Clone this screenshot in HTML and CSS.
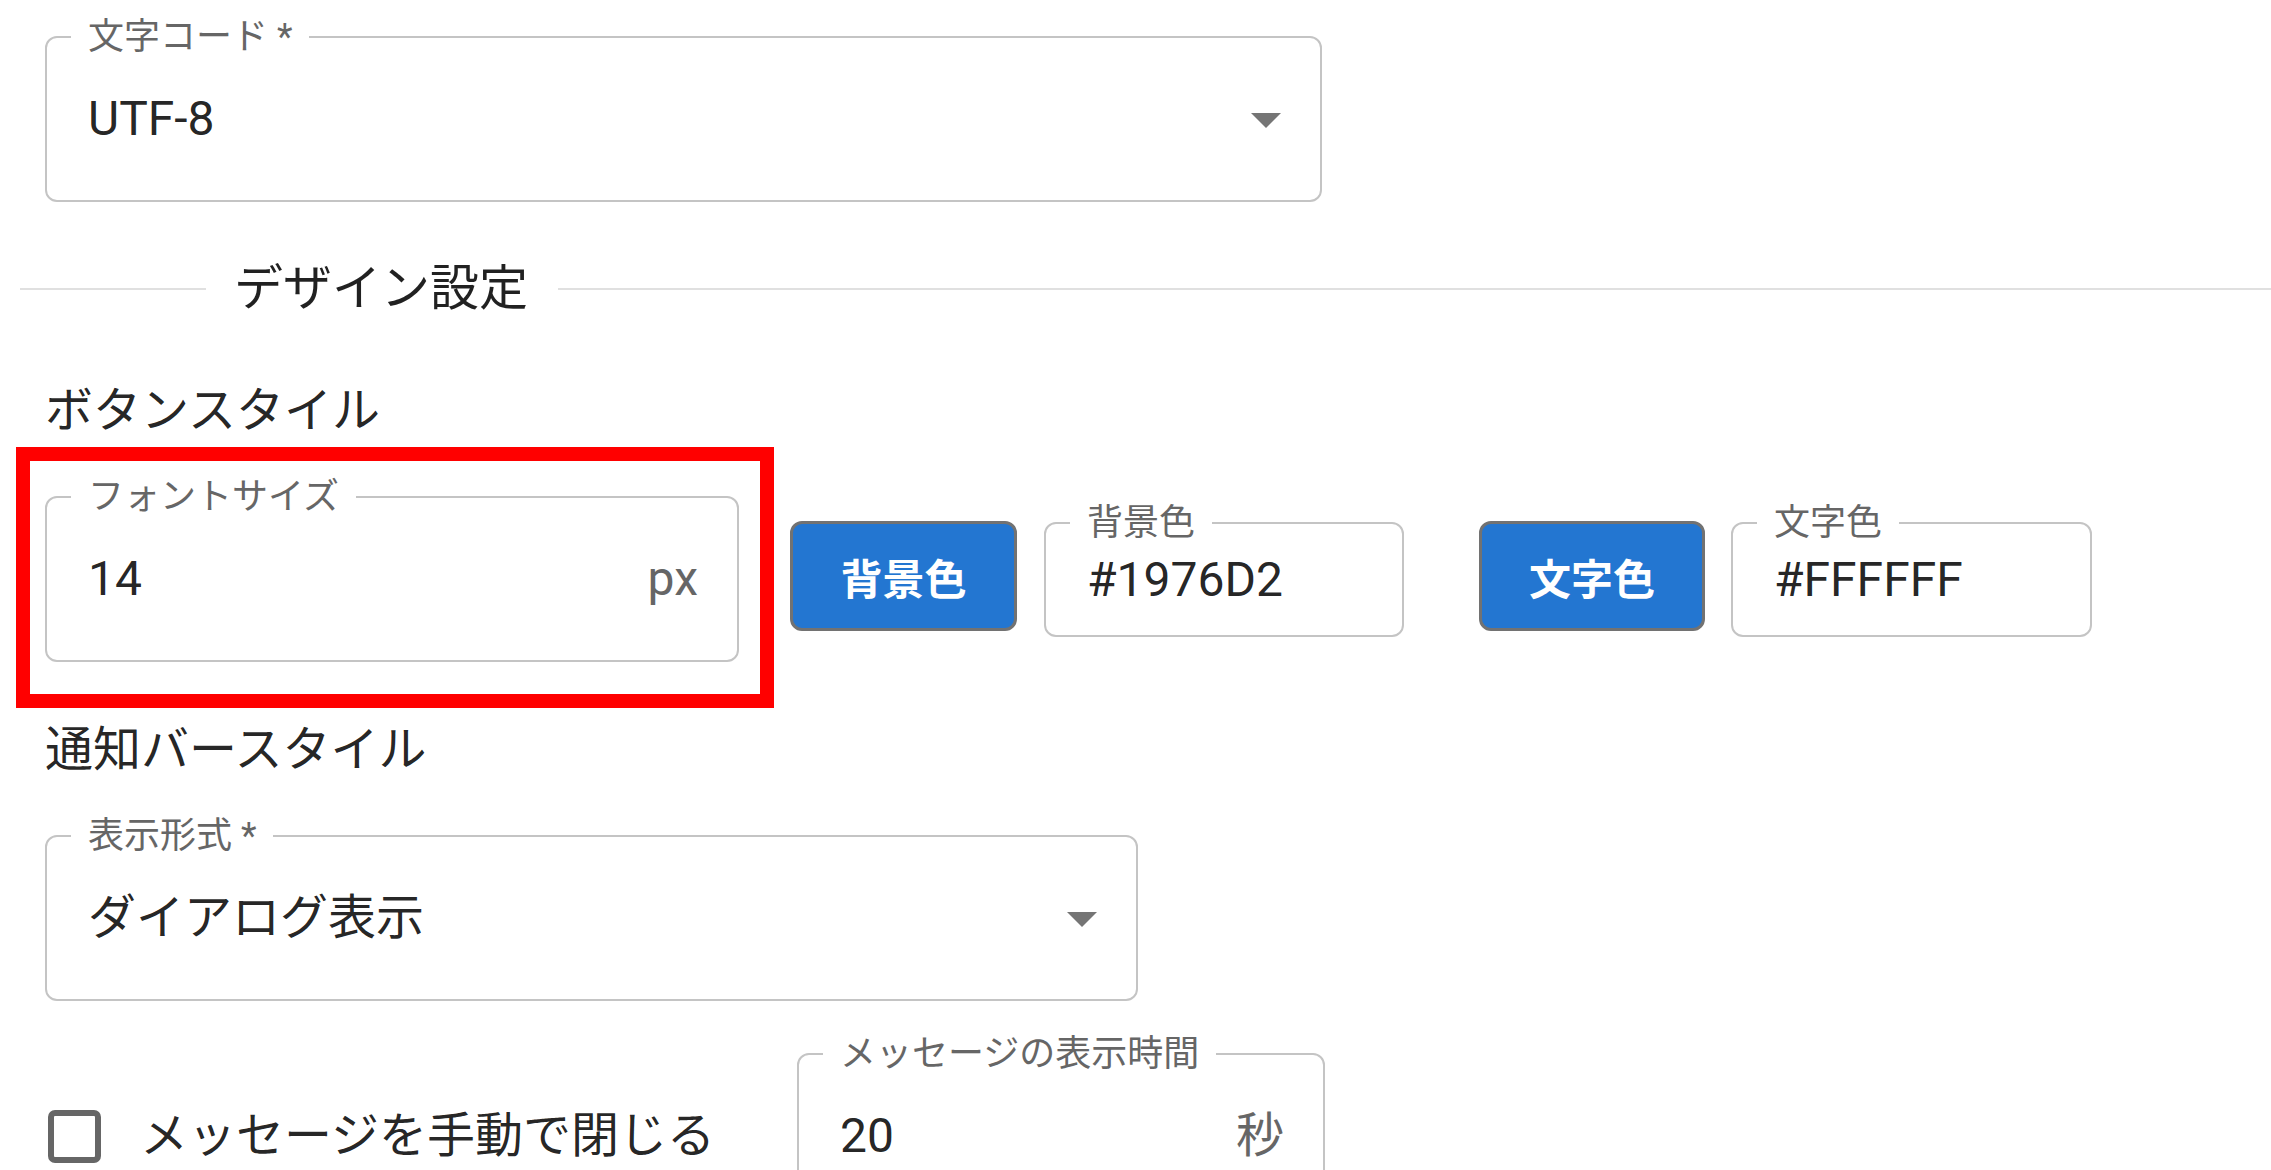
FILE: index.html
```html
<!DOCTYPE html>
<html lang="ja">
<head>
<meta charset="utf-8">
<title>デザイン設定</title>
<link rel="stylesheet" href="styles.css">
</head>
<body>
<main class="page">
  <div class="field select w-charset">
    <span class="label">文字コード *</span>
    <span class="value">UTF-8</span>
    <svg class="arrow" width="30" height="15" viewBox="0 0 30 15" aria-hidden="true"><path d="M0 0 L30 0 L15 15 Z"/></svg>
  </div>

  <div class="divider">
    <span class="line line-left"></span>
    <span class="divider-text">デザイン設定</span>
    <span class="line line-right"></span>
  </div>

  <h2 class="section">ボタンスタイル</h2>

  <div class="button-row">
    <div class="highlight-wrap">
      <div class="field w-size">
        <span class="label">フォントサイズ</span>
        <span class="value">14</span>
        <span class="adorn">px</span>
      </div>
      <div class="highlight"></div>
    </div>
    <button class="color-btn first-btn" type="button">背景色</button>
    <div class="field small first-color">
      <span class="label">背景色</span>
      <span class="value">#1976D2</span>
    </div>
    <button class="color-btn second-btn" type="button">文字色</button>
    <div class="field small second-color">
      <span class="label">文字色</span>
      <span class="value">#FFFFFF</span>
    </div>
  </div>

  <h2 class="section section-notice">通知バースタイル</h2>

  <div class="field select w-mode">
    <span class="label">表示形式 *</span>
    <span class="value">ダイアログ表示</span>
    <svg class="arrow" width="30" height="15" viewBox="0 0 30 15" aria-hidden="true"><path d="M0 0 L30 0 L15 15 Z"/></svg>
  </div>

  <div class="bottom-row">
    <label class="check">
      <span class="box"></span>
      <span class="check-text">メッセージを手動で閉じる</span>
    </label>
    <div class="field w-time">
      <span class="label">メッセージの表示時間</span>
      <span class="value">20</span>
      <span class="adorn">秒</span>
    </div>
  </div>
</main>
</body>
</html>
```

FILE: styles.css
```css
* {
  box-sizing: border-box;
}

html,
body {
  margin: 0;
  background: #ffffff;
}

body {
  font-family: Roboto, "Noto Sans CJK JP", sans-serif;
  color: rgba(0, 0, 0, 0.87);
  height: 1170px;
  overflow: hidden;
}

.page {
  padding: 36px 0 0 45px;
}

/* outlined text field */
.field {
  position: relative;
  display: flex;
  align-items: center;
  height: 166px;
  border: 2px solid #c4c4c4;
  border-radius: 12px;
  padding: 0 39px 0 41px;
  background: #ffffff;
}

.field.small {
  height: 115px;
}

.label {
  position: absolute;
  left: 24px;
  top: -19px;
  padding: 0 17px;
  background: #ffffff;
  font-size: 36px;
  line-height: 36px;
  color: #666666;
  white-space: nowrap;
}

.value {
  font-size: 48px;
  line-height: 48px;
  color: rgba(0, 0, 0, 0.87);
  white-space: nowrap;
}

.adorn {
  margin-left: auto;
  font-size: 48px;
  line-height: 48px;
  color: #666666;
}

.arrow {
  margin-left: auto;
  margin-top: 3px;
  fill: #757575;
  flex: none;
}

.w-charset {
  width: 1277px;
}

.w-mode {
  width: 1093px;
  margin-top: 61px;
}

/* divider with text */
.divider {
  display: flex;
  align-items: center;
  height: 48px;
  margin-top: 63px;
  margin-left: -25px;
}

.line {
  height: 2px;
  background: #e0e0e0;
}

.line-left {
  width: 186px;
  flex: none;
}

.line-right {
  flex: 1;
}

.divider-text {
  padding: 0 30px 0 28px;
  font-size: 49px;
  line-height: 48px;
  white-space: nowrap;
}

.section {
  margin: 74px 0 0;
  font-size: 48px;
  line-height: 48px;
  font-weight: 400;
}

.section-notice {
  margin-top: 64px;
}

/* button style row */
.button-row {
  display: flex;
  align-items: flex-start;
  margin-top: 61px;
}

.highlight-wrap {
  position: relative;
  flex: none;
}

.w-size {
  width: 694px;
}

.highlight {
  position: absolute;
  left: -29px;
  top: -49px;
  width: 758px;
  height: 261px;
  border: 14px solid #ff0000;
  pointer-events: none;
}

.color-btn {
  flex: none;
  margin-top: 25px;
  height: 110px;
  border: 3px solid #727272;
  border-radius: 12px;
  background: #2376d1;
  color: #ffffff;
  font-family: Roboto, "Noto Sans CJK JP", sans-serif;
  font-size: 42px;
  font-weight: 700;
  padding: 0;
}

.first-btn {
  margin-left: 51px;
  width: 227px;
}

.second-btn {
  margin-left: 75px;
  width: 226px;
}

.field.small {
  flex: none;
  margin-top: 26px;
}

.first-color {
  margin-left: 27px;
  width: 360px;
}

.second-color {
  margin-left: 26px;
  width: 361px;
}

/* bottom row */
.bottom-row {
  display: flex;
  align-items: center;
  margin-top: 52px;
}

.check {
  display: flex;
  align-items: center;
  width: 752px;
  flex: none;
}

.box {
  width: 53px;
  height: 53px;
  margin-left: 3px;
  border: 6px solid #666666;
  border-radius: 7px;
  flex: none;
}

.check-text {
  margin-left: 39px;
  font-size: 48px;
  line-height: 48px;
  white-space: nowrap;
}

.w-time {
  width: 528px;
  flex: none;
}
```
